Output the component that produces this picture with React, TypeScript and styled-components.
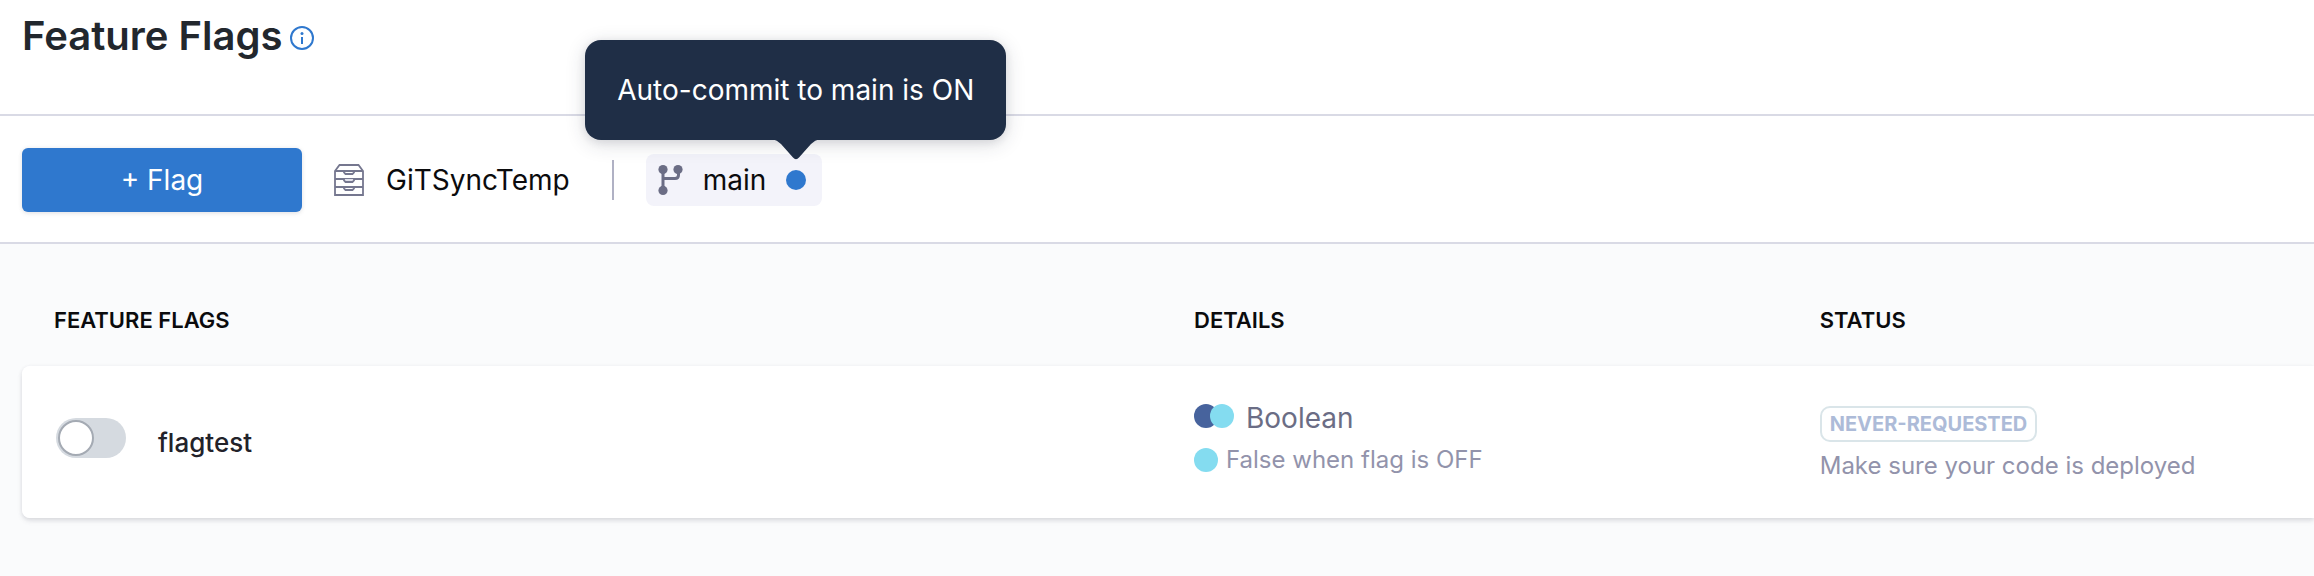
import React from 'react';
import styled, { createGlobalStyle } from 'styled-components';

const GlobalStyle = createGlobalStyle`
  *, *::before { box-sizing: border-box; }
  html, body { margin: 0; min-height: 100%; background: #fafbfc; }
  body {
    font-family: Inter, "Liberation Sans", sans-serif;
    font-size: 28px;
    color: #0b0b0d;
    overflow-x: hidden;
  }
`;

const Header = styled.header`
  display: flex;
  align-items: flex-start;
  gap: 7px;
  height: 116px;
  padding: 12px 22px 0;
  background: #ffffff;
  border-bottom: 2px solid #d9dae5;
`;

const Title = styled.h1`
  margin: 0;
  font-size: 40px;
  line-height: 48px;
  font-weight: 600;
  color: #22272d;
`;

const InfoButton = styled.button`
  display: flex;
  margin: 14px 0 0;
  padding: 0;
  border: 0;
  background: none;
  color: #2f78ce;
`;

const Toolbar = styled.div`
  display: flex;
  align-items: center;
  height: 128px;
  padding: 2px 22px 0;
  background: #ffffff;
  border-bottom: 2px solid #d9dae5;
`;

const AddButton = styled.button`
  width: 280px;
  height: 64px;
  border: 0;
  border-radius: 6px;
  background: #2f78ce;
  box-shadow: 0 0 4px rgba(40, 41, 61, 0.08), 0 2px 4px rgba(96, 97, 112, 0.1);
  color: #ffffff;
  font: inherit;
  line-height: 36px;
`;

const Repo = styled.div`
  display: flex;
  align-items: center;
  gap: 22px;
  margin-left: 32px;
  line-height: 36px;
`;

const Divider = styled.span`
  width: 2px;
  height: 40px;
  margin: 0 32px 0 42px;
  background: #b0b1c4;
`;

const Branch = styled.div`
  display: flex;
  align-items: center;
  height: 52px;
  padding: 0 16px 0 12px;
  border-radius: 8px;
  background: #f3f3fa;
  line-height: 36px;
`;

const BranchName = styled.span`
  margin: 0 20px 0 19px;
`;

const StatusDot = styled.span`
  position: relative;
  width: 20px;
  height: 20px;
  border-radius: 50%;
  background: #2f78ce;
`;

const Tooltip = styled.div`
  position: absolute;
  right: -200px;
  bottom: 50px;
  padding: 32px;
  border-radius: 16px;
  background: #1f2e46;
  box-shadow: 0 4px 20px rgba(40, 41, 61, 0.16), 0 2px 8px rgba(40, 41, 61, 0.1);
  color: #ffffff;
  line-height: 36px;
  white-space: nowrap;
`;

const TooltipArrow = styled.svg`
  position: absolute;
  right: 186px;
  top: 100%;
  margin-top: -1px;
`;

const Main = styled.main`
  padding: 34px 0 56px 22px;
`;

const FlagTable = styled.table`
  width: 100%;
  table-layout: fixed;
  border-collapse: separate;
  border-spacing: 0;
`;

const HeadCell = styled.th<{ $width?: string }>`
  width: ${(p) => p.$width ?? 'auto'};
  height: 88px;
  padding: 0 0 4px 26px;
  text-align: left;
  font-size: 22px;
  line-height: 28px;
  font-weight: 600;

  &:first-child { padding-left: 32px; }
`;

const FlagRow = styled.tr`
  border-radius: 8px 0 0 8px;
  box-shadow: 0 1px 4px rgba(40, 41, 61, 0.08), 0 3px 5px rgba(96, 97, 112, 0.14);
`;

const Cell = styled.td`
  height: 152px;
  padding: 32px 0 0 26px;
  background: #ffffff;
  vertical-align: top;

  &:first-child {
    padding-left: 34px;
    border-radius: 8px 0 0 8px;
  }
`;

const FlagLabel = styled.label`
  display: flex;
  align-items: flex-start;
  gap: 32px;
  padding-top: 20px;
`;

const Toggle = styled.input`
  appearance: none;
  flex: none;
  width: 70px;
  height: 40px;
  margin: 0;
  padding: 2px;
  border-radius: 20px;
  background: #d5dae0;

  &::before {
    content: '';
    display: block;
    width: 36px;
    height: 36px;
    border: 2px solid #a4aab3;
    border-radius: 50%;
    background: #ffffff;
  }
  &:checked { background: #2f78ce; }
  &:checked::before { margin-left: 30px; }
`;

const FlagName = styled.span`
  padding-top: 7px;
  font-size: 26px;
  line-height: 36px;
  font-weight: 500;
  color: #22222a;
`;

const KindLine = styled.div`
  display: flex;
  align-items: center;
  gap: 12px;
  padding-top: 2px;
  line-height: 36px;
  color: #6b6d85;

  svg { margin-bottom: 4px; }
`;

const DetailLine = styled.div`
  display: flex;
  align-items: center;
  gap: 8px;
  padding-top: 10px;
  font-size: 24px;
  line-height: 28px;
  color: #9293ab;
`;

const Badge = styled.span`
  display: block;
  width: fit-content;
  margin-top: 8px;
  padding: 0 8px;
  border: 2px solid #dae5e9;
  border-radius: 10px;
  font-size: 20px;
  line-height: 32px;
  font-weight: 700;
  color: #adbbd8;
`;

const Hint = styled.p`
  margin: 0;
  padding-top: 8px;
  font-size: 24px;
  line-height: 32px;
  color: #9293ab;
`;

const InfoIcon = () => (
  <svg width="24" height="24" viewBox="0 0 24 24" fill="none" stroke="currentColor" strokeWidth="2">
    <circle cx="12" cy="12" r="11" />
    <path d="M12 11v7" />
    <circle cx="12" cy="7.5" r="1.5" fill="currentColor" stroke="none" />
  </svg>
);

const RepoIcon = () => (
  <svg width="30" height="32" viewBox="0 0 30 32" fill="none" stroke="#75778f" strokeWidth="1.8">
    <path d="M1 7v24h28V7L24.500 1h-19zM1 7h28M1 15h28M1 23h28" />
    <path d="M10 7v1.500l1.500 1.500h7l1.500-1.500V7M10 23v1.500l1.500 1.500h7l1.500-1.500V23" />
    <path d="M10 15v1.500l1.500 1.500h7l1.500-1.500V15" fill="#e0e0ea" />
  </svg>
);

const BranchIcon = () => (
  <svg width="26" height="30" viewBox="0 0 26 30" fill="#6b6d85">
    <circle cx="5" cy="4.6" r="4.6" />
    <circle cx="20" cy="4.6" r="4.6" />
    <circle cx="5" cy="25.4" r="4.6" />
    <path d="M5 4v21M5 13.5h12q3.500 0 3.500-3.500V5" fill="none" stroke="#6b6d85" strokeWidth="3" />
  </svg>
);

const BooleanIcon = () => (
  <svg width="40" height="24" viewBox="0 0 40 24">
    <circle cx="12" cy="12" r="12" fill="#47639d" />
    <circle cx="28" cy="12" r="12" fill="#84dcf0" />
  </svg>
);

const VariationIcon = () => (
  <svg width="24" height="24" viewBox="0 0 24 24">
    <circle cx="12" cy="12" r="12" fill="#84dcf0" />
  </svg>
);

export default function App() {
  return (
    <>
      <GlobalStyle />
      <Header>
        <Title>Feature Flags</Title>
        <InfoButton type="button" aria-label="About feature flags">
          <InfoIcon />
        </InfoButton>
      </Header>
      <Toolbar>
        <AddButton type="button">+ Flag</AddButton>
        <Repo>
          <RepoIcon />
          <span>GiTSyncTemp</span>
        </Repo>
        <Divider />
        <Branch>
          <BranchIcon />
          <BranchName>main</BranchName>
          <StatusDot>
            <Tooltip role="tooltip">
              Auto-commit to main is ON
              <TooltipArrow width="48" height="21" viewBox="0 0 48 21">
                <path d="M0 0Q5 1 9 5L21 18.5Q24 22 27 18.5L39 5Q43 1 48 0z" fill="#1f2e46" />
              </TooltipArrow>
            </Tooltip>
          </StatusDot>
        </Branch>
      </Toolbar>
      <Main>
        <FlagTable>
          <thead>
            <tr>
              <HeadCell $width="50%">FEATURE FLAGS</HeadCell>
              <HeadCell $width="27.3%">DETAILS</HeadCell>
              <HeadCell>STATUS</HeadCell>
            </tr>
          </thead>
          <tbody>
            <FlagRow>
              <Cell>
                <FlagLabel>
                  <Toggle type="checkbox" role="switch" />
                  <FlagName>flagtest</FlagName>
                </FlagLabel>
              </Cell>
              <Cell>
                <KindLine>
                  <BooleanIcon />
                  Boolean
                </KindLine>
                <DetailLine>
                  <VariationIcon />
                  False when flag is OFF
                </DetailLine>
              </Cell>
              <Cell>
                <Badge>NEVER-REQUESTED</Badge>
                <Hint>Make sure your code is deployed</Hint>
              </Cell>
            </FlagRow>
          </tbody>
        </FlagTable>
      </Main>
    </>
  );
}
